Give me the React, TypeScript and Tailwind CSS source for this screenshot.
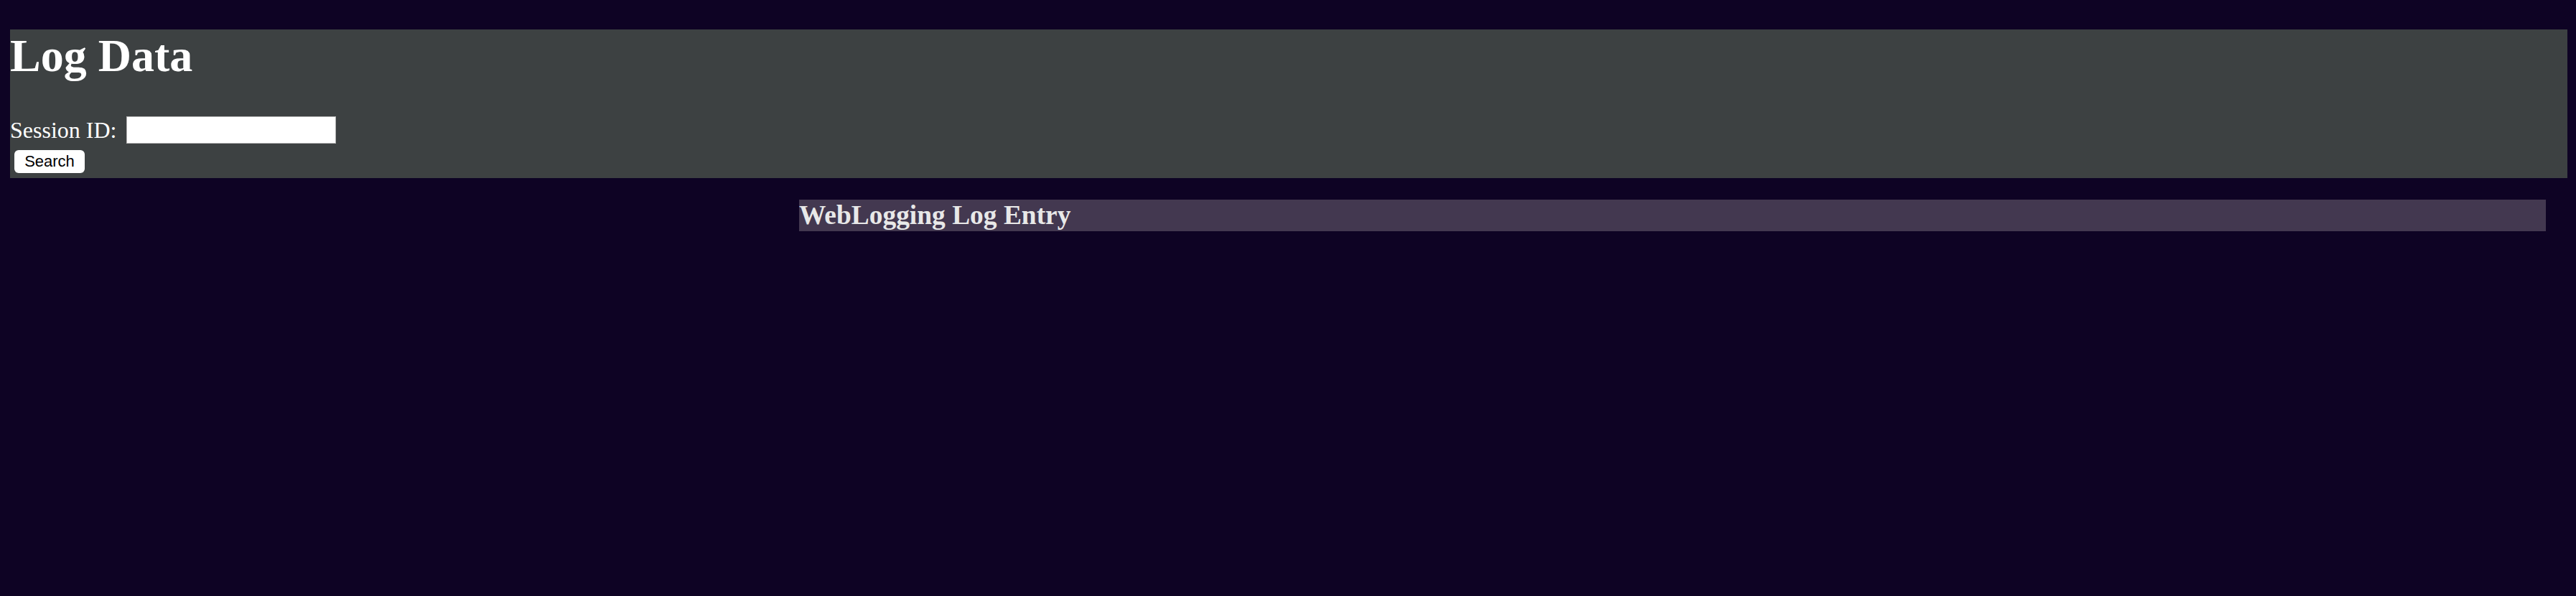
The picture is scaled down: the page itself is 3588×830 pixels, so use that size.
export default function App() {
  return (
    <div className="min-h-[830px] w-full bg-[#0e0324] pt-[41px]" style={{ fontFamily: '"Liberation Serif", "Times New Roman", serif' }}>
      {/* Search header */}
      <header className="ml-[14px] mr-[12px] bg-[#3d4142] pb-[7px] text-white">
        <h1 className="mb-[47px] text-[64px] font-bold leading-[73.6px]">Log Data</h1>
        <div className="flex h-[38px] items-center">
          <label htmlFor="session" className="text-[32px] leading-[38px]">
            Session ID:
          </label>
          <input
            id="session"
            type="text"
            className="ml-[14px] h-[38px] w-[292px] border border-[#b4b4b4] bg-white px-1 text-[26px] text-black outline-none"
          />
        </div>
        <button
          className="ml-[6px] mt-[9px] flex h-[32px] w-[98px] items-center justify-center rounded-[6px] bg-white text-[22px] text-black"
          style={{ fontFamily: '"Liberation Sans", Arial, sans-serif' }}
        >
          Search
        </button>
      </header>

      {/* Log entries */}
      <div className="mt-[30px] flex">
        <aside className="w-[1113px] shrink-0"></aside>
        <main className="mr-[42px] flex-1">
          <h3 className="h-[44px] bg-[#433850] text-[37.44px] font-bold leading-[44px] text-[#e8e8e8]">WebLogging Log Entry</h3>
        </main>
      </div>
    </div>
  );
}
